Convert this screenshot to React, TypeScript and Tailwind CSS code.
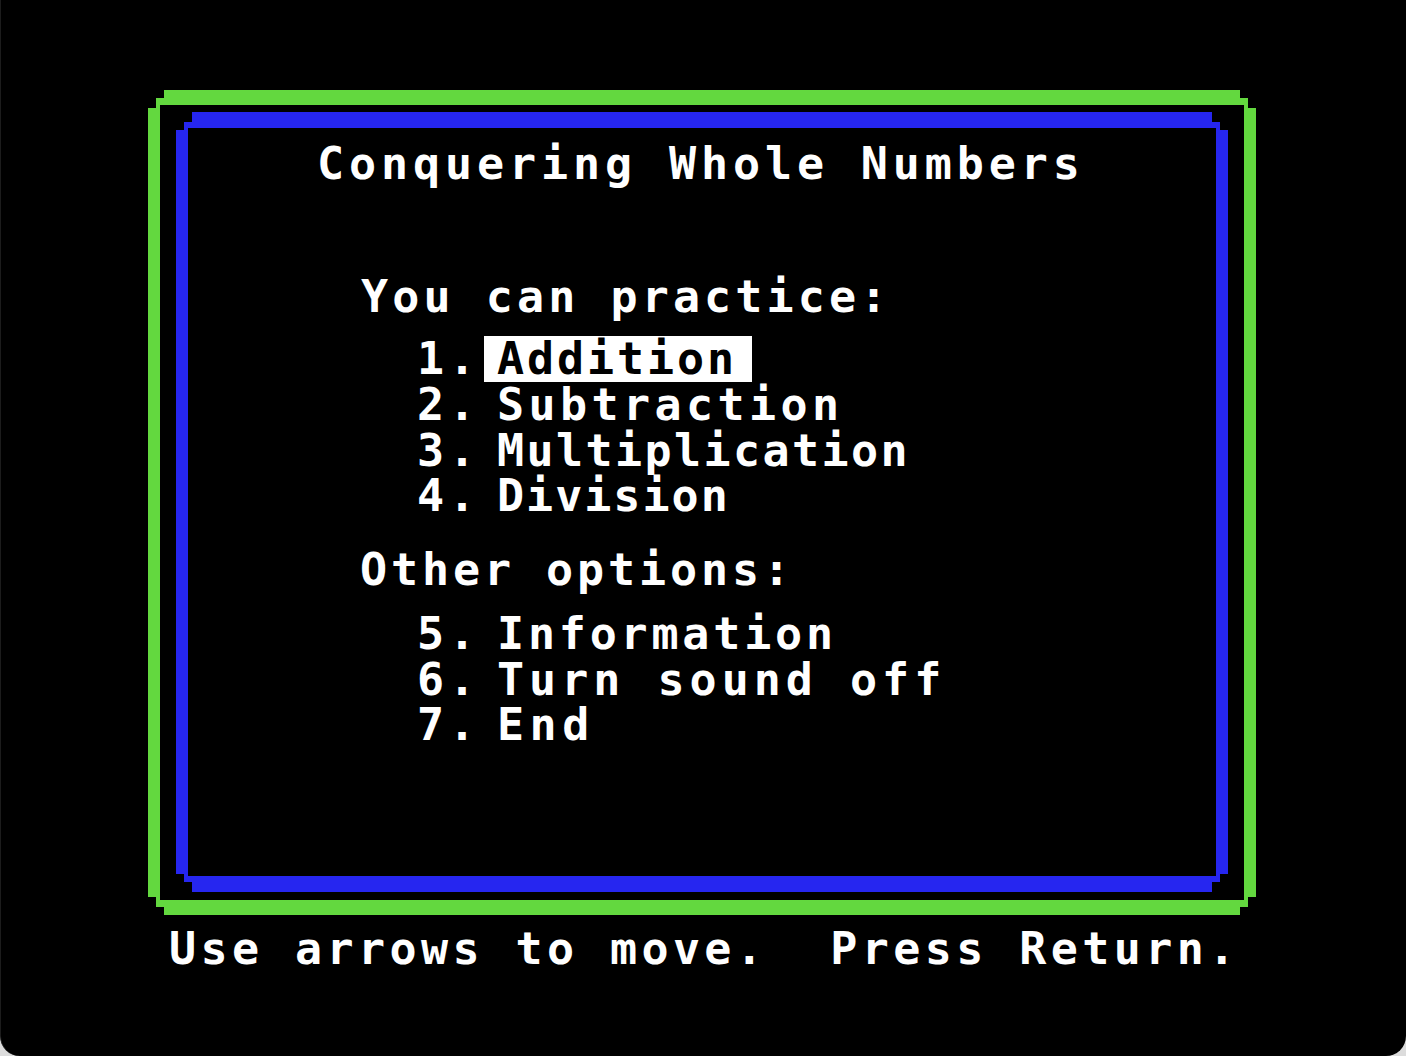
import React from 'react';

// stepped "pixel" corners for both frames
const GREEN_CLIP =
  '[clip-path:polygon(16px_0,calc(100%_-_16px)_0,calc(100%_-_16px)_8px,calc(100%_-_8px)_8px,calc(100%_-_8px)_18px,100%_18px,100%_calc(100%_-_18px),calc(100%_-_8px)_calc(100%_-_18px),calc(100%_-_8px)_calc(100%_-_8px),calc(100%_-_16px)_calc(100%_-_8px),calc(100%_-_16px)_100%,16px_100%,16px_calc(100%_-_8px),8px_calc(100%_-_8px),8px_calc(100%_-_18px),0_calc(100%_-_18px),0_18px,8px_18px,8px_8px,16px_8px)]';

const BLUE_CLIP =
  '[clip-path:polygon(16px_0,calc(100%_-_16px)_0,calc(100%_-_16px)_10px,calc(100%_-_8px)_10px,calc(100%_-_8px)_18px,100%_18px,100%_calc(100%_-_18px),calc(100%_-_8px)_calc(100%_-_18px),calc(100%_-_8px)_calc(100%_-_10px),calc(100%_-_16px)_calc(100%_-_10px),calc(100%_-_16px)_100%,16px_100%,16px_calc(100%_-_10px),8px_calc(100%_-_10px),8px_calc(100%_-_18px),0_calc(100%_-_18px),0_18px,8px_18px,8px_10px,16px_10px)]';

interface MenuItem {
  num: string;
  label: string;
  tracking: string;
  active?: boolean;
}

const PRACTICE: MenuItem[] = [
  { num: '1.', label: 'Addition', tracking: 'tracking-[2.9px]', active: true },
  { num: '2.', label: 'Subtraction', tracking: 'tracking-[4.4px]' },
  { num: '3.', label: 'Multiplication', tracking: 'tracking-[2.4px]' },
  { num: '4.', label: 'Division', tracking: 'tracking-[2px]' },
];

const OTHER: MenuItem[] = [
  { num: '5.', label: 'Information', tracking: 'tracking-[3.8px]' },
  { num: '6.', label: 'Turn sound off', tracking: 'tracking-[5px]' },
  { num: '7.', label: 'End', tracking: 'tracking-[5.5px]' },
];

const MenuRow: React.FC<{ item: MenuItem }> = ({ item }) => (
  <div className="flex h-[45.7px] leading-[45.7px] pl-[229px]">
    <span className="w-[67px] tracking-[4.4px]">{item.num}</span>
    <span
      className={
        item.active
          ? `pl-[13px] pr-[15px] bg-white text-black whitespace-pre ${item.tracking}`
          : `pl-[13px] whitespace-pre ${item.tracking}`
      }
    >
      {item.label}
    </span>
  </div>
);

export default function App() {
  return (
    <div className="bg-[#dcdcdc] w-[1406px] h-[1056px]">
      <div className="w-[1406px] h-[1056px] bg-black rounded-b-[20px] border-l border-[#1c1c1c] pl-[147px] pt-[90px] text-white font-bold font-['DejaVu_Sans_Mono',monospace] text-[45px]">
        {/* green outer frame */}
        <div
          className={`w-[1108px] h-[825px] border-x-[12px] border-y-[15px] border-[#63d83f] pl-[16px] pr-[16px] pt-[7px] pb-[8px] ${GREEN_CLIP}`}
        >
          {/* blue inner frame */}
          <div
            className={`w-full h-full border-x-[12px] border-y-[16px] border-[#2626f0] pt-[13px] ${BLUE_CLIP}`}
          >
            <div className="h-[45.7px] leading-[45.7px] pl-[129px] tracking-[4.9px] whitespace-pre">
              Conquering Whole Numbers
            </div>

            <div className="mt-[87px] h-[45.7px] leading-[45.7px] pl-[173px] tracking-[4.1px] whitespace-pre">
              You can practice:
            </div>

            <div className="mt-[17px] flex flex-col">
              {PRACTICE.map((item) => (
                <MenuRow key={item.num} item={item} />
              ))}
            </div>

            <div className="mt-[28px] h-[45.7px] leading-[45.7px] pl-[172px] tracking-[3.9px] whitespace-pre">
              Other options:
            </div>

            <div className="mt-[18px] flex flex-col">
              {OTHER.map((item) => (
                <MenuRow key={item.num} item={item} />
              ))}
            </div>
          </div>
        </div>

        {/* footer prompt */}
        <div className="mt-[11px] h-[45.7px] leading-[45.7px] pl-[21px] tracking-[4.4px] whitespace-pre">
          Use arrows to move.  Press Return.
        </div>
      </div>
    </div>
  );
}
